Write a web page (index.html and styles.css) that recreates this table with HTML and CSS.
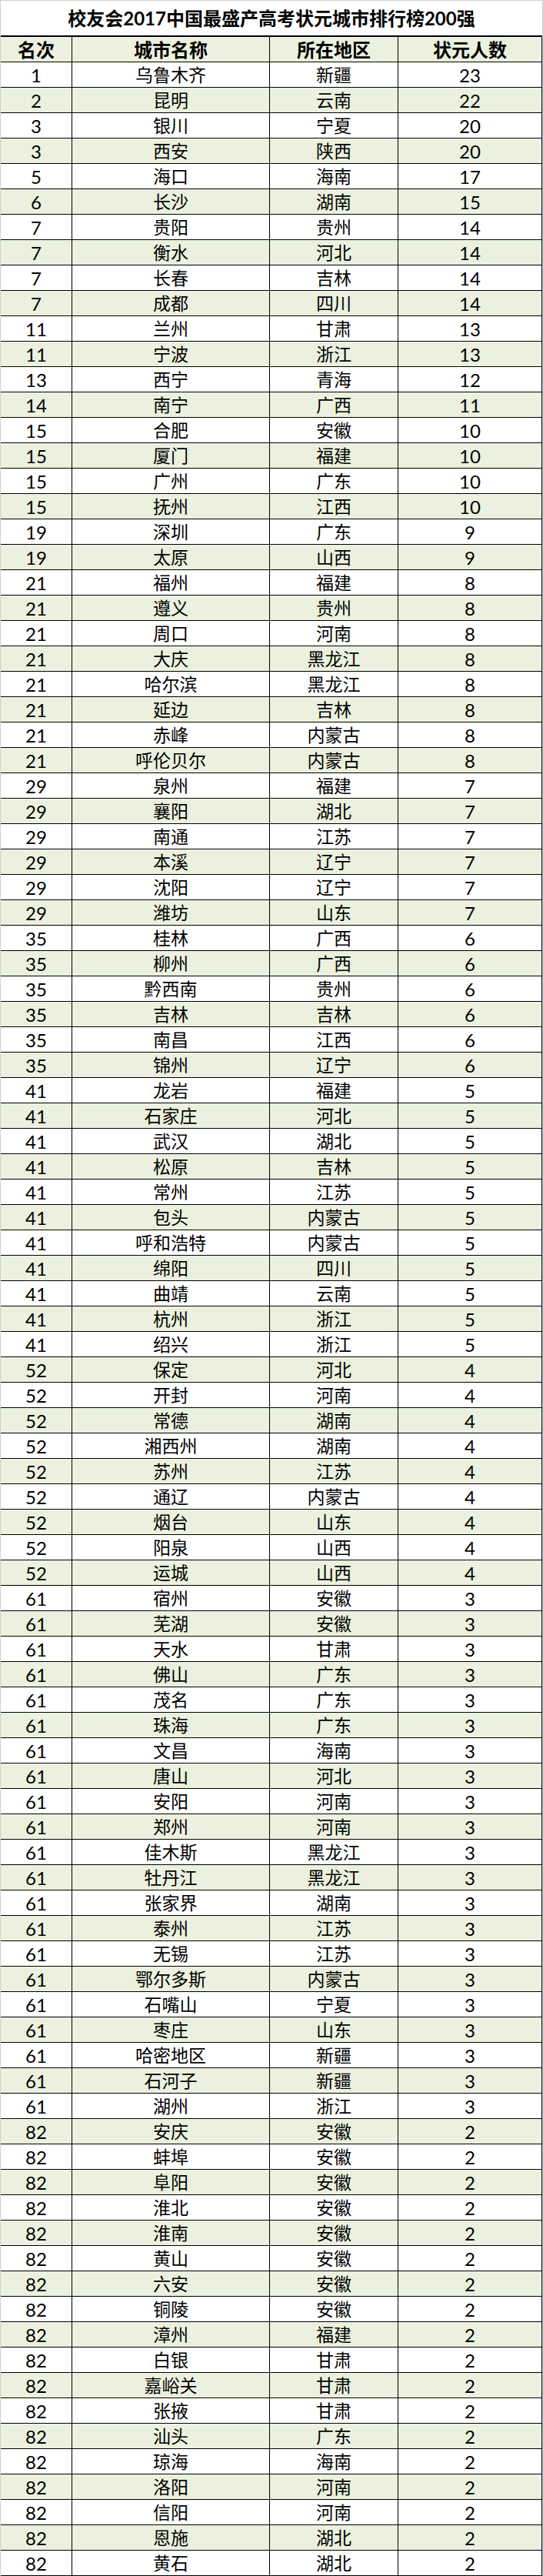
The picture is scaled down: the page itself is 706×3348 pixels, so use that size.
FILE: index.html
```html
<!DOCTYPE html>
<html lang="zh-CN">
<head>
<meta charset="utf-8">
<title>校友会2017中国最盛产高考状元城市排行榜200强</title>
<link rel="stylesheet" href="styles.css">
</head>
<body>
<div class="sheet">
  <div class="title">校友会2017中国最盛产高考状元城市排行榜200强</div>
  <div class="row head"><span>名次</span><span>城市名称</span><span>所在地区</span><span>状元人数</span></div>
  <div class="rows">
    <div class="row"><span class="num">1</span><span class="txt">乌鲁木齐</span><span class="txt">新疆</span><span class="num">23</span></div>
    <div class="row"><span class="num">2</span><span class="txt">昆明</span><span class="txt">云南</span><span class="num">22</span></div>
    <div class="row"><span class="num">3</span><span class="txt">银川</span><span class="txt">宁夏</span><span class="num">20</span></div>
    <div class="row"><span class="num">3</span><span class="txt">西安</span><span class="txt">陕西</span><span class="num">20</span></div>
    <div class="row"><span class="num">5</span><span class="txt">海口</span><span class="txt">海南</span><span class="num">17</span></div>
    <div class="row"><span class="num">6</span><span class="txt">长沙</span><span class="txt">湖南</span><span class="num">15</span></div>
    <div class="row"><span class="num">7</span><span class="txt">贵阳</span><span class="txt">贵州</span><span class="num">14</span></div>
    <div class="row"><span class="num">7</span><span class="txt">衡水</span><span class="txt">河北</span><span class="num">14</span></div>
    <div class="row"><span class="num">7</span><span class="txt">长春</span><span class="txt">吉林</span><span class="num">14</span></div>
    <div class="row"><span class="num">7</span><span class="txt">成都</span><span class="txt">四川</span><span class="num">14</span></div>
    <div class="row"><span class="num">11</span><span class="txt">兰州</span><span class="txt">甘肃</span><span class="num">13</span></div>
    <div class="row"><span class="num">11</span><span class="txt">宁波</span><span class="txt">浙江</span><span class="num">13</span></div>
    <div class="row"><span class="num">13</span><span class="txt">西宁</span><span class="txt">青海</span><span class="num">12</span></div>
    <div class="row"><span class="num">14</span><span class="txt">南宁</span><span class="txt">广西</span><span class="num">11</span></div>
    <div class="row"><span class="num">15</span><span class="txt">合肥</span><span class="txt">安徽</span><span class="num">10</span></div>
    <div class="row"><span class="num">15</span><span class="txt">厦门</span><span class="txt">福建</span><span class="num">10</span></div>
    <div class="row"><span class="num">15</span><span class="txt">广州</span><span class="txt">广东</span><span class="num">10</span></div>
    <div class="row"><span class="num">15</span><span class="txt">抚州</span><span class="txt">江西</span><span class="num">10</span></div>
    <div class="row"><span class="num">19</span><span class="txt">深圳</span><span class="txt">广东</span><span class="num">9</span></div>
    <div class="row"><span class="num">19</span><span class="txt">太原</span><span class="txt">山西</span><span class="num">9</span></div>
    <div class="row"><span class="num">21</span><span class="txt">福州</span><span class="txt">福建</span><span class="num">8</span></div>
    <div class="row"><span class="num">21</span><span class="txt">遵义</span><span class="txt">贵州</span><span class="num">8</span></div>
    <div class="row"><span class="num">21</span><span class="txt">周口</span><span class="txt">河南</span><span class="num">8</span></div>
    <div class="row"><span class="num">21</span><span class="txt">大庆</span><span class="txt">黑龙江</span><span class="num">8</span></div>
    <div class="row"><span class="num">21</span><span class="txt">哈尔滨</span><span class="txt">黑龙江</span><span class="num">8</span></div>
    <div class="row"><span class="num">21</span><span class="txt">延边</span><span class="txt">吉林</span><span class="num">8</span></div>
    <div class="row"><span class="num">21</span><span class="txt">赤峰</span><span class="txt">内蒙古</span><span class="num">8</span></div>
    <div class="row"><span class="num">21</span><span class="txt">呼伦贝尔</span><span class="txt">内蒙古</span><span class="num">8</span></div>
    <div class="row"><span class="num">29</span><span class="txt">泉州</span><span class="txt">福建</span><span class="num">7</span></div>
    <div class="row"><span class="num">29</span><span class="txt">襄阳</span><span class="txt">湖北</span><span class="num">7</span></div>
    <div class="row"><span class="num">29</span><span class="txt">南通</span><span class="txt">江苏</span><span class="num">7</span></div>
    <div class="row"><span class="num">29</span><span class="txt">本溪</span><span class="txt">辽宁</span><span class="num">7</span></div>
    <div class="row"><span class="num">29</span><span class="txt">沈阳</span><span class="txt">辽宁</span><span class="num">7</span></div>
    <div class="row"><span class="num">29</span><span class="txt">潍坊</span><span class="txt">山东</span><span class="num">7</span></div>
    <div class="row"><span class="num">35</span><span class="txt">桂林</span><span class="txt">广西</span><span class="num">6</span></div>
    <div class="row"><span class="num">35</span><span class="txt">柳州</span><span class="txt">广西</span><span class="num">6</span></div>
    <div class="row"><span class="num">35</span><span class="txt">黔西南</span><span class="txt">贵州</span><span class="num">6</span></div>
    <div class="row"><span class="num">35</span><span class="txt">吉林</span><span class="txt">吉林</span><span class="num">6</span></div>
    <div class="row"><span class="num">35</span><span class="txt">南昌</span><span class="txt">江西</span><span class="num">6</span></div>
    <div class="row"><span class="num">35</span><span class="txt">锦州</span><span class="txt">辽宁</span><span class="num">6</span></div>
    <div class="row"><span class="num">41</span><span class="txt">龙岩</span><span class="txt">福建</span><span class="num">5</span></div>
    <div class="row"><span class="num">41</span><span class="txt">石家庄</span><span class="txt">河北</span><span class="num">5</span></div>
    <div class="row"><span class="num">41</span><span class="txt">武汉</span><span class="txt">湖北</span><span class="num">5</span></div>
    <div class="row"><span class="num">41</span><span class="txt">松原</span><span class="txt">吉林</span><span class="num">5</span></div>
    <div class="row"><span class="num">41</span><span class="txt">常州</span><span class="txt">江苏</span><span class="num">5</span></div>
    <div class="row"><span class="num">41</span><span class="txt">包头</span><span class="txt">内蒙古</span><span class="num">5</span></div>
    <div class="row"><span class="num">41</span><span class="txt">呼和浩特</span><span class="txt">内蒙古</span><span class="num">5</span></div>
    <div class="row"><span class="num">41</span><span class="txt">绵阳</span><span class="txt">四川</span><span class="num">5</span></div>
    <div class="row"><span class="num">41</span><span class="txt">曲靖</span><span class="txt">云南</span><span class="num">5</span></div>
    <div class="row"><span class="num">41</span><span class="txt">杭州</span><span class="txt">浙江</span><span class="num">5</span></div>
    <div class="row"><span class="num">41</span><span class="txt">绍兴</span><span class="txt">浙江</span><span class="num">5</span></div>
    <div class="row"><span class="num">52</span><span class="txt">保定</span><span class="txt">河北</span><span class="num">4</span></div>
    <div class="row"><span class="num">52</span><span class="txt">开封</span><span class="txt">河南</span><span class="num">4</span></div>
    <div class="row"><span class="num">52</span><span class="txt">常德</span><span class="txt">湖南</span><span class="num">4</span></div>
    <div class="row"><span class="num">52</span><span class="txt">湘西州</span><span class="txt">湖南</span><span class="num">4</span></div>
    <div class="row"><span class="num">52</span><span class="txt">苏州</span><span class="txt">江苏</span><span class="num">4</span></div>
    <div class="row"><span class="num">52</span><span class="txt">通辽</span><span class="txt">内蒙古</span><span class="num">4</span></div>
    <div class="row"><span class="num">52</span><span class="txt">烟台</span><span class="txt">山东</span><span class="num">4</span></div>
    <div class="row"><span class="num">52</span><span class="txt">阳泉</span><span class="txt">山西</span><span class="num">4</span></div>
    <div class="row"><span class="num">52</span><span class="txt">运城</span><span class="txt">山西</span><span class="num">4</span></div>
    <div class="row"><span class="num">61</span><span class="txt">宿州</span><span class="txt">安徽</span><span class="num">3</span></div>
    <div class="row"><span class="num">61</span><span class="txt">芜湖</span><span class="txt">安徽</span><span class="num">3</span></div>
    <div class="row"><span class="num">61</span><span class="txt">天水</span><span class="txt">甘肃</span><span class="num">3</span></div>
    <div class="row"><span class="num">61</span><span class="txt">佛山</span><span class="txt">广东</span><span class="num">3</span></div>
    <div class="row"><span class="num">61</span><span class="txt">茂名</span><span class="txt">广东</span><span class="num">3</span></div>
    <div class="row"><span class="num">61</span><span class="txt">珠海</span><span class="txt">广东</span><span class="num">3</span></div>
    <div class="row"><span class="num">61</span><span class="txt">文昌</span><span class="txt">海南</span><span class="num">3</span></div>
    <div class="row"><span class="num">61</span><span class="txt">唐山</span><span class="txt">河北</span><span class="num">3</span></div>
    <div class="row"><span class="num">61</span><span class="txt">安阳</span><span class="txt">河南</span><span class="num">3</span></div>
    <div class="row"><span class="num">61</span><span class="txt">郑州</span><span class="txt">河南</span><span class="num">3</span></div>
    <div class="row"><span class="num">61</span><span class="txt">佳木斯</span><span class="txt">黑龙江</span><span class="num">3</span></div>
    <div class="row"><span class="num">61</span><span class="txt">牡丹江</span><span class="txt">黑龙江</span><span class="num">3</span></div>
    <div class="row"><span class="num">61</span><span class="txt">张家界</span><span class="txt">湖南</span><span class="num">3</span></div>
    <div class="row"><span class="num">61</span><span class="txt">泰州</span><span class="txt">江苏</span><span class="num">3</span></div>
    <div class="row"><span class="num">61</span><span class="txt">无锡</span><span class="txt">江苏</span><span class="num">3</span></div>
    <div class="row"><span class="num">61</span><span class="txt">鄂尔多斯</span><span class="txt">内蒙古</span><span class="num">3</span></div>
    <div class="row"><span class="num">61</span><span class="txt">石嘴山</span><span class="txt">宁夏</span><span class="num">3</span></div>
    <div class="row"><span class="num">61</span><span class="txt">枣庄</span><span class="txt">山东</span><span class="num">3</span></div>
    <div class="row"><span class="num">61</span><span class="txt">哈密地区</span><span class="txt">新疆</span><span class="num">3</span></div>
    <div class="row"><span class="num">61</span><span class="txt">石河子</span><span class="txt">新疆</span><span class="num">3</span></div>
    <div class="row"><span class="num">61</span><span class="txt">湖州</span><span class="txt">浙江</span><span class="num">3</span></div>
    <div class="row"><span class="num">82</span><span class="txt">安庆</span><span class="txt">安徽</span><span class="num">2</span></div>
    <div class="row"><span class="num">82</span><span class="txt">蚌埠</span><span class="txt">安徽</span><span class="num">2</span></div>
    <div class="row"><span class="num">82</span><span class="txt">阜阳</span><span class="txt">安徽</span><span class="num">2</span></div>
    <div class="row"><span class="num">82</span><span class="txt">淮北</span><span class="txt">安徽</span><span class="num">2</span></div>
    <div class="row"><span class="num">82</span><span class="txt">淮南</span><span class="txt">安徽</span><span class="num">2</span></div>
    <div class="row"><span class="num">82</span><span class="txt">黄山</span><span class="txt">安徽</span><span class="num">2</span></div>
    <div class="row"><span class="num">82</span><span class="txt">六安</span><span class="txt">安徽</span><span class="num">2</span></div>
    <div class="row"><span class="num">82</span><span class="txt">铜陵</span><span class="txt">安徽</span><span class="num">2</span></div>
    <div class="row"><span class="num">82</span><span class="txt">漳州</span><span class="txt">福建</span><span class="num">2</span></div>
    <div class="row"><span class="num">82</span><span class="txt">白银</span><span class="txt">甘肃</span><span class="num">2</span></div>
    <div class="row"><span class="num">82</span><span class="txt">嘉峪关</span><span class="txt">甘肃</span><span class="num">2</span></div>
    <div class="row"><span class="num">82</span><span class="txt">张掖</span><span class="txt">甘肃</span><span class="num">2</span></div>
    <div class="row"><span class="num">82</span><span class="txt">汕头</span><span class="txt">广东</span><span class="num">2</span></div>
    <div class="row"><span class="num">82</span><span class="txt">琼海</span><span class="txt">海南</span><span class="num">2</span></div>
    <div class="row"><span class="num">82</span><span class="txt">洛阳</span><span class="txt">河南</span><span class="num">2</span></div>
    <div class="row"><span class="num">82</span><span class="txt">信阳</span><span class="txt">河南</span><span class="num">2</span></div>
    <div class="row"><span class="num">82</span><span class="txt">恩施</span><span class="txt">湖北</span><span class="num">2</span></div>
    <div class="row"><span class="num">82</span><span class="txt">黄石</span><span class="txt">湖北</span><span class="num">2</span></div>
  </div>
</div>
</body>
</html>
```
FILE: styles.css
```css
html, body {
  margin: 0;
  padding: 0;
  background: #ffffff;
}

.sheet {
  width: 704px;
  border-left: 1px solid #d0d0d0;
  border-right: 1px solid #d0d0d0;
  font-family: Lato, "Noto Sans CJK SC", sans-serif;
  color: #000000;
}

.title {
  height: 45px;
  border-top: 1px solid #d0d0d0;
  border-bottom: 2px solid #000000;
  text-align: center;
  font-weight: 700;
  font-size: 24px;
  line-height: 46px;
  letter-spacing: 0;
}

.row {
  display: grid;
  grid-template-columns: 93px 257px 167px 187px;
  height: 32px;
  border-bottom: 1px solid #000000;
  background: #ffffff;
}

.row > span {
  display: block;
  border-right: 1px solid #000000;
  text-align: center;
  line-height: 33px;
  height: 32px;
  overflow: hidden;
  white-space: nowrap;
}

.row > span:first-child {
  border-right-width: 1px;
}

.row.head {
  background: #ebf1de;
}

.row.head > span {
  font-weight: 700;
  font-size: 24px;
}

.rows .row:nth-child(even) {
  background: #ebf1de;
}

.num {
  font-size: 24px;
}

.txt {
  font-size: 23px;
}
```
